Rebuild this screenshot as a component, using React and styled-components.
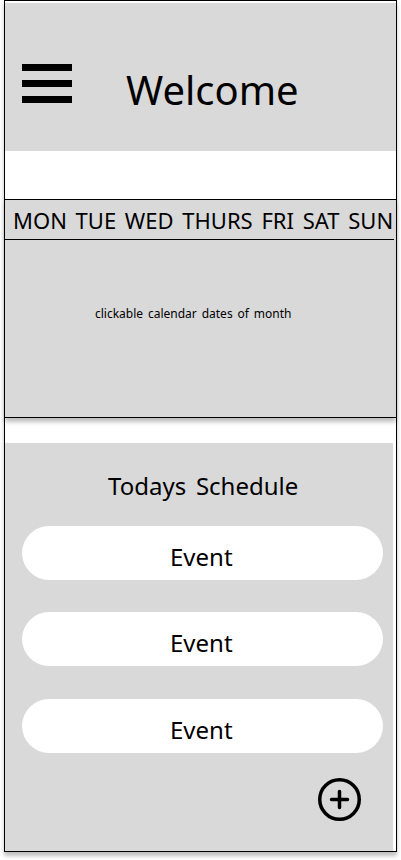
import React from 'react';
import styled, { createGlobalStyle } from 'styled-components';

const GlobalStyle = createGlobalStyle`
  * { box-sizing: border-box; }
  body { margin: 0; min-height: 860px; background: #fff; color: #000; font-family: "Noto Sans", sans-serif; }
`;
const Screen = styled.main`
  width: 393px; height: 852px; margin: 0 4px 8px; border: 1px solid #000;
  box-shadow: 0 4px 4px rgba(0, 0, 0, 0.25);
  display: flex; flex-direction: column; background: #fff;
`;
const Header = styled.header`
  height: 148px; margin-top: 2px; padding: 0 0 0 17px; background: #d9d9d9; display: flex; flex: none;
`;
const MenuButton = styled.button`
  width: 50px; height: 39px; margin: 61px 0 0; padding: 0; border: 0; background: none;
  display: flex; flex-direction: column; justify-content: space-between;
`;
const MenuBar = styled.span`height: 7px; width: 100%; background: #000;`;
const Title = styled.h1`
  margin: 59px 0 0 54px; font-size: 40px; line-height: 56px; font-weight: 400; white-space: nowrap;
`;
const Calendar = styled.section`
  height: 219px; margin-top: 48px; background: #d9d9d9; border: solid #000; border-width: 1px 0;
  box-shadow: 0 4px 4px rgba(0, 0, 0, 0.25); flex: none;
`;
const Weekdays = styled.div`
  height: 40px; width: 389px; padding-left: 8px; border-bottom: 1px solid #000;
  font-size: 22px; line-height: 41px; white-space: pre; word-spacing: 3px;
`;
const CalendarNote = styled.p`
  margin: 65px 0 0 90px; font-size: 12px; line-height: 17px; white-space: nowrap; word-spacing: 1.75px;
`;
const Schedule = styled.section`
  flex: 1; width: 388px; margin-top: 25px; padding: 26px 10px 0 17px; background: #d9d9d9;
`;
const Subtitle = styled.h2`
  margin: 0 0 23px 86px; font-size: 24px; line-height: 34px; font-weight: 400; white-space: nowrap; word-spacing: 3.5px;
`;
const EventList = styled.div`display: flex; flex-direction: column; gap: 32px;`;
const EventButton = styled.button`
  width: 361px; height: 54px; padding: 7px 0 0 148px; border: 0; border-radius: 27px; background: #fff;
  color: #000; font: 400 24px/34px "Noto Sans", sans-serif; text-align: left;
  &:last-child { margin-top: 1px; }
`;
const AddButton = styled.button`
  display: block; width: 43px; height: 43px; margin: 25px 0 0 296px; padding: 0; border: 0; background: none;
`;

export default function App() {
  return (
    <>
      <GlobalStyle />
      <Screen>
        <Header>
          <MenuButton aria-label="Menu"><MenuBar /><MenuBar /><MenuBar /></MenuButton>
          <Title>Welcome</Title>
        </Header>
        <Calendar>
          <Weekdays>MON TUE WED THURS FRI SAT SUN</Weekdays>
          <CalendarNote>clickable calendar dates of month</CalendarNote>
        </Calendar>
        <Schedule>
          <Subtitle>Todays Schedule</Subtitle>
          <EventList>
            {[1, 2, 3].map((id) => <EventButton key={id}>Event</EventButton>)}
          </EventList>
          <AddButton aria-label="Add event">
            <svg width="43" height="43" viewBox="0 0 43 43" fill="none" stroke="#000" strokeWidth="3.5" strokeLinecap="round" display="block">
              <circle cx="21.5" cy="21.5" r="19.75" /><path d="M21.5 13.5v16M13.5 21.5h16" />
            </svg>
          </AddButton>
        </Schedule>
      </Screen>
    </>
  );
}
